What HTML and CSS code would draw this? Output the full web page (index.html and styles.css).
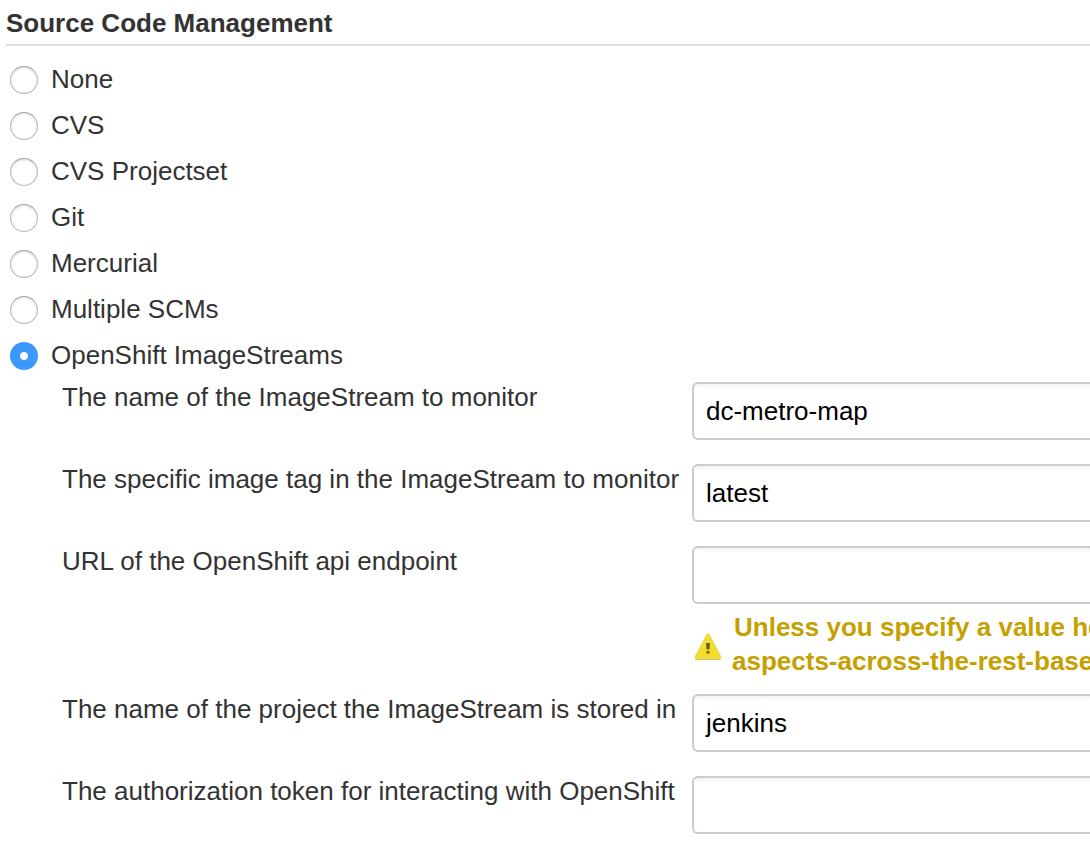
FILE: index.html
```html
<!DOCTYPE html>
<html lang="en">
<head>
<meta charset="utf-8">
<title>Source Code Management</title>
<link rel="stylesheet" href="styles.css">
</head>
<body>
<main class="config">
<h1 class="heading">Source Code Management</h1>
<div class="options">
<label class="option"><input type="radio" name="scm"><span class="name">None</span></label>
<label class="option"><input type="radio" name="scm"><span class="name">CVS</span></label>
<label class="option"><input type="radio" name="scm"><span class="name">CVS Projectset</span></label>
<label class="option"><input type="radio" name="scm"><span class="name">Git</span></label>
<label class="option"><input type="radio" name="scm"><span class="name">Mercurial</span></label>
<label class="option"><input type="radio" name="scm"><span class="name">Multiple SCMs</span></label>
<label class="option"><input type="radio" name="scm" checked><span class="name">OpenShift ImageStreams</span></label>
</div>
<div class="fields">
<div class="field"><label for="stream">The name of the ImageStream to monitor</label><input id="stream" type="text" value="dc-metro-map"></div>
<div class="field"><label for="tag">The specific image tag in the ImageStream to monitor</label><input id="tag" type="text" value="latest"></div>
<div class="field field-warned"><label for="url">URL of the OpenShift api endpoint</label><div class="control"><input id="url" type="text">
<div class="warning"><svg class="warning-icon" width="30" height="30" viewBox="0 0 30 30"><defs><linearGradient id="amber" x2="0" y2="1"><stop offset="0" stop-color="#efe04a"/><stop offset="1" stop-color="#f8dc10"/></linearGradient></defs><path d="M15 3.500 26.500 25.500H3.500Z" fill="url(#amber)" stroke="#f0dc3c" stroke-width="4" stroke-linejoin="round"/><path d="M3 27.500H27" stroke="#d8c658" stroke-width="1" stroke-linecap="round"/><path d="M13 11h4l-.5 6.500h-3ZM13.500 19h3v2.500h-3Z" fill="#6b6024"/></svg><p class="warning-text"><span class="first">Unless you specify a value he</span><br>aspects-across-the-rest-base</p></div></div></div>
<div class="field"><label for="project">The name of the project the ImageStream is stored in</label><input id="project" type="text" value="jenkins"></div>
<div class="field"><label for="token">The authorization token for interacting with OpenShift</label><input id="token" type="text"></div>
</div>
</main>
</body>
</html>
```
FILE: styles.css
```css
* { box-sizing: border-box; }
body { margin: 0; background: #fff; color: #333; font: 26px/46px "Liberation Sans", Arial, sans-serif; }
.config { height: 852px; overflow: hidden; }
.heading { margin: 0 0 11px 6px; height: 46px; border-bottom: 2px solid #ddd; font-size: 26px; line-height: 46px; font-weight: bold; }
.option { display: flex; align-items: center; height: 46px; padding-left: 10px; gap: 13px; }
.option .name { padding-bottom: 2px; }
.option input { appearance: none; margin: 0; width: 28px; height: 28px; border: 1px solid #b8b8b8; border-top-color: #a5a5a5; border-radius: 50%; background: #fff; box-shadow: inset 0 1px 3px #dcdcdc; }
.option input:checked { border: 0; background: radial-gradient(circle, #fff 0 3.5px, #3b99fc 4.5px); box-shadow: none; }
.fields { padding: 3px 0 0 62px; }
.field { display: grid; grid-template-columns: 630px minmax(0, 1fr); height: 82px; align-items: start; }
.field label { line-height: 30px; white-space: nowrap; }
.field input { display: block; width: 100%; height: 58px; padding: 0 0 0 8px; text-indent: 4px; border: 2px solid #ccc; border-right: 0; border-radius: 6px 0 0 6px; background: linear-gradient(#f3f3f3, #fff 5px); color: #000; font: inherit; }
.field-warned { height: 148px; }
.warning { display: flex; padding-top: 6px; overflow: hidden; }
.warning-icon { margin: 22px 9px 0 1px; flex: none; }
.warning-text { margin: 0; color: #c4a000; font-weight: bold; line-height: 34px; white-space: nowrap; }
.first { margin-left: 2px; }
```
